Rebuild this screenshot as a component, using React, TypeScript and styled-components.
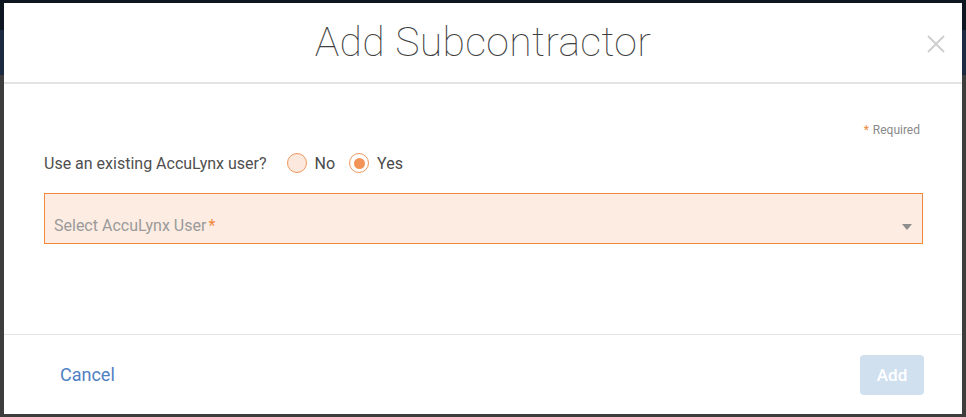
import React, { useState } from 'react';
import styled, { createGlobalStyle } from 'styled-components';

const GlobalStyle = createGlobalStyle`
  html, body {
    margin: 0;
    padding: 0;
    height: 100%;
  }
  body {
    font-family: Roboto, "Liberation Sans", Arial, sans-serif;
    background: #3d3d3d;
    overflow: hidden;
  }
  * {
    box-sizing: border-box;
  }
`;

const orange = '#f0883f';

const Page = styled.div`
  height: 417px;
  display: flex;
  flex-direction: column;
  background: #3d3d3d;
`;

const AppBar = styled.div`
  height: 30px;
  background: #0c1520;
`;

const SubBar = styled.div`
  height: 45px;
  background: #1b2a40;
`;

const Overlay = styled.div`
  position: fixed;
  inset: 0;
  padding: 3px 4px;
  display: flex;
`;

const Modal = styled.div`
  width: 958px;
  height: 411px;
  background: #fff;
  display: flex;
  flex-direction: column;
`;

const Header = styled.div`
  position: relative;
  height: 81px;
  border-bottom: 2px solid #e3e3e3;
  display: flex;
  align-items: center;
  justify-content: center;
`;

const Title = styled.h1`
  margin: 0 0 2px 0;
  font-size: 41px;
  font-weight: 100;
  color: #3f3f3f;
  letter-spacing: 0.3px;
`;

const CloseButton = styled.button`
  position: absolute;
  right: 16px;
  top: 31px;
  width: 20px;
  height: 20px;
  padding: 0;
  border: none;
  background: none;
  cursor: pointer;
`;

const Body = styled.div`
  flex: 1;
  padding: 39px 39px 0 40px;
  display: flex;
  flex-direction: column;
`;

const RequiredNote = styled.div`
  align-self: flex-end;
  font-size: 12px;
  color: #8a8a8a;
  display: flex;
  align-items: center;
  gap: 4px;
  margin-right: 3px;
`;

const Star = styled.span`
  color: ${orange};
`;

const QuestionRow = styled.div`
  display: flex;
  align-items: center;
  margin-top: 16px;
  font-size: 16px;
  color: #4f4f4f;
`;

const Question = styled.span`
  margin-right: 20px;
`;

const RadioOption = styled.label`
  display: flex;
  align-items: center;
  gap: 8px;
  margin-right: 14px;
  cursor: pointer;
  color: #4a4a4a;
`;

const RadioCircle = styled.span<{ checked: boolean }>`
  width: 20px;
  height: 20px;
  border-radius: 50%;
  border: 1.5px solid #f0965c;
  background: ${props => (props.checked ? '#fff' : '#fde8de')};
  display: flex;
  align-items: center;
  justify-content: center;
  &::after {
    content: '';
    width: 11px;
    height: 11px;
    border-radius: 50%;
    background: ${props => (props.checked ? '#f29458' : 'transparent')};
  }
`;

const SelectBox = styled.div`
  margin-top: 20px;
  height: 51px;
  border: 1px solid ${orange};
  background: #fdece2;
  display: flex;
  align-items: flex-end;
  justify-content: space-between;
  padding: 0 10px 8px 9px;
`;

const Placeholder = styled.span`
  font-size: 16px;
  color: #9a9a9a;
`;

const RequiredStar = styled.span`
  color: ${orange};
  margin-left: 2px;
`;

const Caret = styled.span`
  width: 0;
  height: 0;
  border-left: 5px solid transparent;
  border-right: 5px solid transparent;
  border-top: 6px solid #8e8e8e;
  margin-bottom: 5px;
`;

const Footer = styled.div`
  height: 80px;
  border-top: 1px solid #e3e3e3;
  display: flex;
  align-items: center;
  justify-content: space-between;
  padding: 0 38px 0 56px;
`;

const CancelButton = styled.button`
  border: none;
  background: none;
  padding: 0;
  font-family: inherit;
  font-size: 18px;
  color: #4f80c4;
  cursor: pointer;
`;

const AddButton = styled.button`
  width: 64px;
  height: 40px;
  border: none;
  border-radius: 4px;
  background: #d0e0ef;
  color: #fff;
  font-family: inherit;
  font-size: 17px;
  font-weight: 500;
  cursor: default;
`;

export default function App() {
  const [existing, setExisting] = useState(true);

  return (
    <>
      <GlobalStyle />
      <Page>
        <AppBar />
        <SubBar />
      </Page>
      <Overlay>
        <Modal>
          <Header>
            <Title>Add Subcontractor</Title>
            <CloseButton aria-label="Close">
              <svg width="20" height="20" viewBox="0 0 20 20">
                <path d="M2 2 L18 18 M18 2 L2 18" stroke="#cfcfcf" strokeWidth="2" />
              </svg>
            </CloseButton>
          </Header>
          <Body>
            <RequiredNote>
              <Star>*</Star> Required
            </RequiredNote>
            <QuestionRow>
              <Question>Use an existing AccuLynx user?</Question>
              <RadioOption onClick={() => setExisting(false)}>
                <RadioCircle checked={!existing} />
                No
              </RadioOption>
              <RadioOption onClick={() => setExisting(true)}>
                <RadioCircle checked={existing} />
                Yes
              </RadioOption>
            </QuestionRow>
            <SelectBox>
              <Placeholder>
                Select AccuLynx User<RequiredStar>*</RequiredStar>
              </Placeholder>
              <Caret />
            </SelectBox>
          </Body>
          <Footer>
            <CancelButton>Cancel</CancelButton>
            <AddButton disabled>Add</AddButton>
          </Footer>
        </Modal>
      </Overlay>
    </>
  );
}
